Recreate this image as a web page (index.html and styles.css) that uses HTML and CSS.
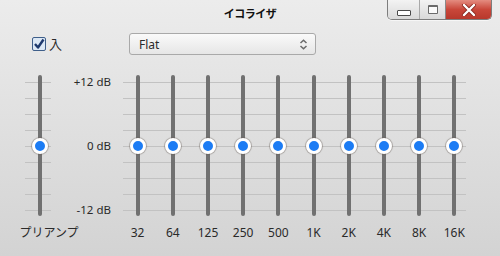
FILE: index.html
```html
<!DOCTYPE html>
<html lang="ja">
<head>
    <meta charset="UTF-8">
    <title>イコライザ</title>
    <link rel="stylesheet" href="styles.css">
</head>
<body>
    <div class="window">
        <header class="titlebar">
            <h1 class="title">イコライザ</h1>
            <div class="winbtns">
                <button type="button" class="wb wb-min"><span class="ico-min"></span></button>
                <button type="button" class="wb wb-max"><span class="ico-max"></span></button>
                <button type="button" class="wb wb-close">
                    <svg width="16" height="12" viewBox="0 0 16 12"><path d="M3 1 L13 11 M13 1 L3 11" stroke="#8a2a20" stroke-width="4" stroke-linecap="round"/><path d="M3 1 L13 11 M13 1 L3 11" stroke="#fff" stroke-width="2.4" stroke-linecap="round"/></svg>
                </button>
            </div>
        </header>

        <div class="controls">
            <label class="onoff">
                <svg class="check" width="14" height="14" viewBox="0 0 14 14">
                    <rect x="0.5" y="0.5" width="13" height="13" rx="1.5" fill="#dce8f5" stroke="#3f5f8a"/>
                    <path d="M3 7 L6 10.5 L11.5 2.5" fill="none" stroke="#1f3a6e" stroke-width="2.4" stroke-linejoin="round"/>
                </svg>
                入
            </label>
            <div class="preset">
                <span>Flat</span>
                <svg width="9" height="11" viewBox="0 0 9 11"><path d="M1.5 4 L4.5 1.2 L7.5 4 M1.5 7 L4.5 9.8 L7.5 7" fill="none" stroke="#6a6a6a" stroke-width="1.5"/></svg>
            </div>
        </div>

        <div class="eq">
            <div class="preamp">
                <div class="slider preamp-slider">
                    <div class="track"></div>
                    <div class="knob"></div>
                </div>
                <div class="label preamp-label">プリアンプ</div>
            </div>

            <div class="scale">
                <span>+12 dB</span>
                <span>0 dB</span>
                <span>-12 dB</span>
            </div>

            <div class="bands">
                <div class="band"><div class="slider"><div class="track"></div><div class="knob"></div></div><div class="label">32</div></div>
                <div class="band"><div class="slider"><div class="track"></div><div class="knob"></div></div><div class="label">64</div></div>
                <div class="band"><div class="slider"><div class="track"></div><div class="knob"></div></div><div class="label">125</div></div>
                <div class="band"><div class="slider"><div class="track"></div><div class="knob"></div></div><div class="label">250</div></div>
                <div class="band"><div class="slider"><div class="track"></div><div class="knob"></div></div><div class="label">500</div></div>
                <div class="band"><div class="slider"><div class="track"></div><div class="knob"></div></div><div class="label">1K</div></div>
                <div class="band"><div class="slider"><div class="track"></div><div class="knob"></div></div><div class="label">2K</div></div>
                <div class="band"><div class="slider"><div class="track"></div><div class="knob"></div></div><div class="label">4K</div></div>
                <div class="band"><div class="slider"><div class="track"></div><div class="knob"></div></div><div class="label">8K</div></div>
                <div class="band"><div class="slider"><div class="track"></div><div class="knob"></div></div><div class="label">16K</div></div>
            </div>
        </div>
    </div>
</body>
</html>
```

FILE: styles.css
```css
html,
body {
    margin: 0;
    padding: 0;
}

body {
    font-family: "Noto Sans", "Noto Sans CJK JP", sans-serif;
    font-size: 12px;
    color: #2a2a2a;
}

.window {
    width: 500px;
    height: 256px;
    background: linear-gradient(#ececec, #d3d3d3);
    overflow: hidden;
}

/* title bar */
.titlebar {
    display: grid;
    grid-template-columns: 1fr auto 1fr;
    align-items: start;
    height: 28px;
}

.title {
    grid-column: 2;
    margin: 6px 0 0;
    font-size: 11px;
    font-weight: bold;
    line-height: 16px;
    color: #111;
    letter-spacing: -0.5px;
}

.winbtns {
    grid-column: 3;
    justify-self: end;
    display: flex;
    margin-right: 8px;
    height: 19px;
    border: 1px solid #7d7d7d;
    border-top: 0;
    border-radius: 0 0 5px 5px;
    overflow: hidden;
    box-shadow: 0 1px 0 #f6f6f6;
}

.wb {
    display: flex;
    align-items: center;
    justify-content: center;
    padding: 0;
    border: 0;
    height: 19px;
    background: linear-gradient(#f3f3f3, #d9d9d9);
}

.wb-min {
    width: 32px;
    border-right: 1px solid #a9a9a9;
}

.wb-max {
    width: 26px;
    border-right: 1px solid #8a8a8a;
}

.wb-close {
    width: 45px;
    background: linear-gradient(#e48c80, #c9473a 50%, #b8382c);
}

.ico-min {
    width: 12px;
    height: 4px;
    margin-top: 6px;
    border: 1px solid #4a4a4a;
    border-radius: 1px;
    background: #fff;
}

.ico-max {
    width: 8px;
    height: 6px;
    border: 1px solid #6a6a6a;
    border-top-width: 2px;
    border-radius: 1px;
    background: #fafafa;
}

/* controls row */
.controls {
    display: flex;
    align-items: center;
    margin-top: 5px;
    height: 22px;
}

.onoff {
    display: flex;
    align-items: center;
    gap: 3px;
    margin-left: 32px;
    font-size: 13px;
    line-height: 16px;
}

.preset {
    display: flex;
    align-items: center;
    justify-content: space-between;
    box-sizing: border-box;
    width: 187px;
    height: 22px;
    margin-left: 67px;
    padding: 0 7px 0 9px;
    border: 1px solid #a9a9a9;
    border-radius: 3px;
    background: linear-gradient(#fafafa, #e6e6e6);
    font-size: 12px;
}

/* equalizer */
.eq {
    display: flex;
    margin-top: 20px;
}

.preamp {
    display: flex;
    flex-direction: column;
    align-items: center;
    width: 26px;
    margin-left: 25px;
}

.slider {
    position: relative;
    display: flex;
    flex-shrink: 0;
    justify-content: center;
    width: 100%;
    height: 141px;
}

.preamp-slider,
.bands {
    background-image: linear-gradient(#c2c2c2 1px, transparent 1px);
    background-position: 0 7px;
    background-repeat: repeat-y;
}

.preamp-slider {
    background-size: 100% 16px;
}

.bands {
    background-size: 343px 16px;
    background-position: 3px 7px;
}

.preamp-slider .track {
    margin-left: 4px;
}

.preamp-slider .knob {
    left: 7px;
    margin-left: 0;
}

.track {
    width: 4px;
    height: 100%;
    border-radius: 2px;
    background: #717171;
}

.knob {
    position: absolute;
    top: 63px;
    left: 50%;
    margin-left: -8px;
    box-sizing: border-box;
    width: 16px;
    height: 16px;
    border: 3px solid #fff;
    border-radius: 50%;
    background: #1c7cf4;
    box-shadow: 0 0 0 1px rgba(120, 110, 100, 0.35), 0 0 2px rgba(0, 0, 0, 0.25);
}

.label {
    margin-top: 9px;
    line-height: 16px;
    font-size: 12px;
    white-space: nowrap;
    text-align: center;
}

.preamp-label {
    margin-left: 22px;
}

.scale {
    display: flex;
    flex-direction: column;
    justify-content: space-between;
    align-items: flex-end;
    width: 60px;
    height: 142px;
    font-size: 11.5px;
    line-height: 14px;
}

.bands {
    display: flex;
    height: 141px;
    margin-left: 9px;
}

.band {
    display: flex;
    flex-direction: column;
    align-items: center;
    width: 35.2px;
}
```
